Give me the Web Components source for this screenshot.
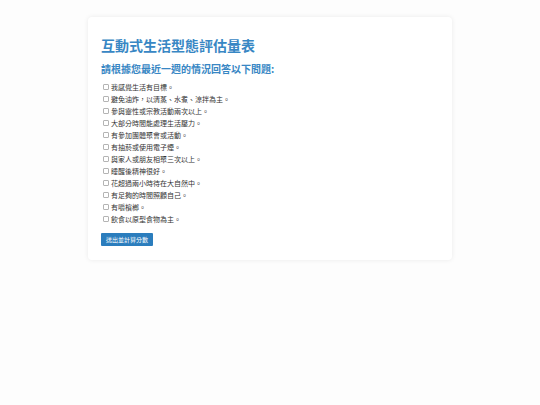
<!DOCTYPE html>
<html lang="zh-Hant">
<head>
<meta charset="utf-8">
<meta name="viewport" content="width=device-width, initial-scale=1">
<title>互動式生活型態評估量表</title>
<style>
body { margin: 0; padding: 17px 16px; background: #fdfdfd; color: #333; font-family: "Noto Sans CJK TC", sans-serif; }
</style>
</head>
<body>
<survey-card>
  <span slot="title">互動式生活型態評估量表</span>
  <span slot="subtitle">請根據您最近一週的情況回答以下問題:</span>
  <survey-item>我感覺生活有目標。</survey-item>
  <survey-item>避免油炸，以清蒸、水煮、涼拌為主。</survey-item>
  <survey-item>參與靈性或宗教活動兩次以上。</survey-item>
  <survey-item>大部分時間能處理生活壓力。</survey-item>
  <survey-item>有參加團體聚會或活動。</survey-item>
  <survey-item>有抽菸或使用電子煙。</survey-item>
  <survey-item>與家人或朋友相聚三次以上。</survey-item>
  <survey-item>睡醒後精神很好。</survey-item>
  <survey-item>花超過兩小時待在大自然中。</survey-item>
  <survey-item>有足夠的時間照顧自己。</survey-item>
  <survey-item>有嚼檳榔。</survey-item>
  <survey-item>飲食以原型食物為主。</survey-item>
  <submit-button slot="action">送出並計算分數</submit-button>
</survey-card>
<script>
const define = (name, markup) => {
  const template = document.createElement('template');
  template.innerHTML = markup;
  customElements.define(name, class extends HTMLElement {
    constructor() {
      super();
      this.attachShadow({ mode: 'open' }).append(template.content.cloneNode(true));
    }
  });
};

define('survey-card', `
  <style>
    :host { display: block; box-sizing: border-box; max-width: 364px; margin: 0 auto; padding: 18px 14px 14px 13px; background: #fff; border-radius: 4px; box-shadow: 0 0 5px rgba(0, 0, 0, .08); }
    h1, h2 { margin: 0; color: #3887c4; font-weight: 700; }
    h1 { font-size: 14px; line-height: 20px; }
    h2 { margin-top: 6px; font-size: 10px; line-height: 16px; }
    form { display: flex; flex-direction: column; margin-top: 4px; }
    .action { margin-top: 8px; }
  </style>
  <h1><slot name="title"></slot></h1>
  <h2><slot name="subtitle"></slot></h2>
  <form>
    <slot></slot>
    <div class="action"><slot name="action"></slot></div>
  </form>`);

define('survey-item', `
  <style>
    :host { display: block; font-size: 7px; line-height: 12px; }
    label { display: flex; align-items: center; gap: 2px; padding-left: 2px; }
    input { appearance: none; box-sizing: border-box; flex: none; width: 6px; height: 6px; margin: 0; border: 1px solid #b4b4b4; border-radius: 1px; background: #fff; }
    input:checked { background: #2b7dbd; border-color: #2b7dbd; }
  </style>
  <label><input type="checkbox"><span><slot></slot></span></label>`);

define('submit-button', `
  <style>
    :host { display: flex; }
    button { margin: 0; padding: 2px 5px; border: 0; border-radius: 1px; background: #2b7dbd; color: #fff; font: inherit; font-size: 6px; line-height: 9px; cursor: pointer; }
  </style>
  <button type="button"><slot></slot></button>`);
</script>
</body>
</html>
